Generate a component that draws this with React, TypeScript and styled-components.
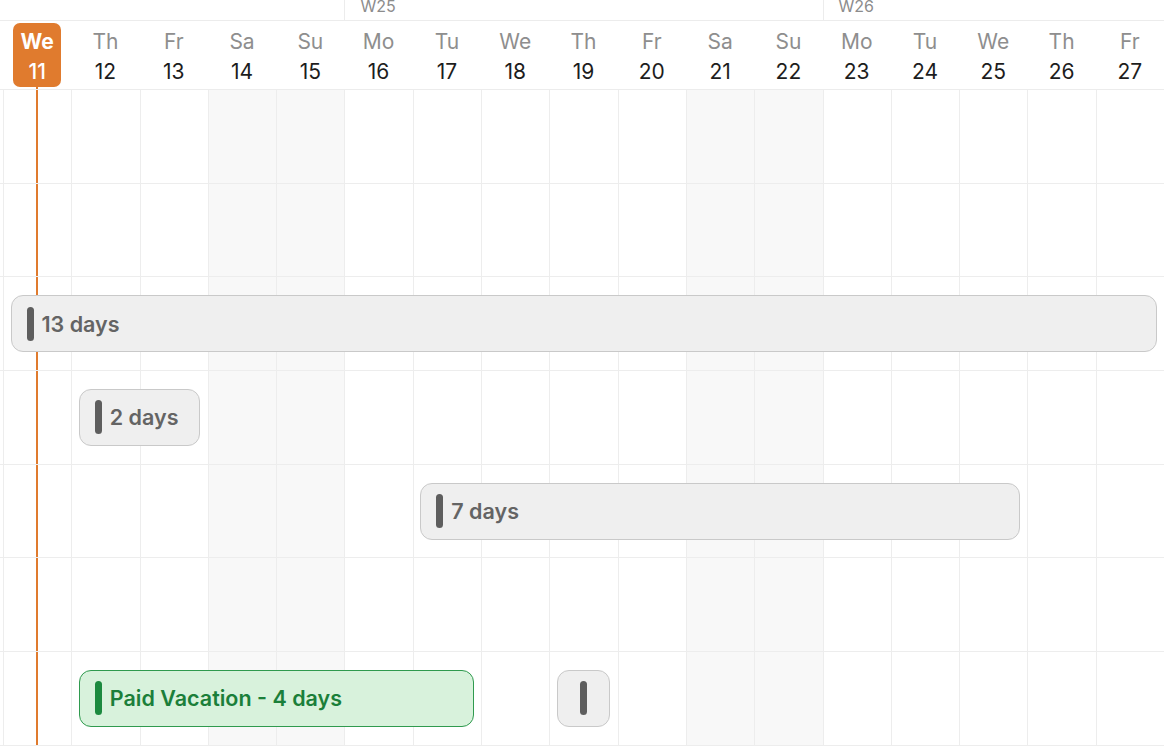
import * as React from 'react';
import styled, { createGlobalStyle, css } from 'styled-components';

const COL = 68.3;
const ROW = 93.7;

const GlobalStyle = createGlobalStyle`
  html, body {
    margin: 0;
    padding: 0;
    background: #fff;
    overflow: hidden;
  }
  body {
    font-family: Inter, "Noto Sans", "Liberation Sans", sans-serif;
    -webkit-font-smoothing: antialiased;
  }
`;

interface Day {
  name: string;
  num: number;
  weekend?: boolean;
  monday?: string;
  today?: boolean;
  offscreen?: boolean;
}

// first column is scrolled out of view, only its right edge line shows
const days: Day[] = [
  { name: 'Tu', num: 10, offscreen: true },
  { name: 'We', num: 11, today: true },
  { name: 'Th', num: 12 },
  { name: 'Fr', num: 13 },
  { name: 'Sa', num: 14, weekend: true },
  { name: 'Su', num: 15, weekend: true },
  { name: 'Mo', num: 16, monday: 'W25' },
  { name: 'Tu', num: 17 },
  { name: 'We', num: 18 },
  { name: 'Th', num: 19 },
  { name: 'Fr', num: 20 },
  { name: 'Sa', num: 21, weekend: true },
  { name: 'Su', num: 22, weekend: true },
  { name: 'Mo', num: 23, monday: 'W26' },
  { name: 'Tu', num: 24 },
  { name: 'We', num: 25 },
  { name: 'Th', num: 26 },
  { name: 'Fr', num: 27 },
];

interface Booking {
  start: number;
  span: number;
  label?: string;
  kind: 'pending' | 'vacation';
}

const lanes: Booking[][] = [
  [],
  [],
  [{ start: 1, span: 17, label: '13 days', kind: 'pending' }],
  [{ start: 2, span: 2, label: '2 days', kind: 'pending' }],
  [{ start: 7, span: 9, label: '7 days', kind: 'pending' }],
  [],
  [
    { start: 2, span: 6, label: 'Paid Vacation - 4 days', kind: 'vacation' },
    { start: 9, span: 1, kind: 'pending' },
  ],
];

const Viewport = styled.div`
  width: 1166px;
  height: 746px;
  overflow: hidden;
`;

const Timeline = styled.div`
  margin-left: ${-COL + 3}px;
  width: ${COL * days.length}px;
`;

const Columns = styled.div`
  display: grid;
  grid-template-columns: repeat(${days.length}, ${COL}px);
`;

const WeekRow = styled(Columns)`
  height: 21px;
  border-bottom: 1px solid #ececec;
  box-sizing: border-box;
`;

const WeekCell = styled.div<{ $start?: boolean }>`
  height: 100%;
  white-space: nowrap;
  ${(p) => p.$start && css`border-left: 1px solid #ececec;`}
`;

const WeekLabel = styled.span`
  display: block;
  padding-left: 15px;
  font-size: 16px;
  line-height: 12px;
  color: #8c8c8c;
`;

const HeaderRow = styled(Columns)`
  height: 69px;
  border-bottom: 1px solid #ececec;
  box-sizing: border-box;
`;

const HeaderCell = styled.div<{ $today?: boolean }>`
  display: flex;
  justify-content: center;
  ${(p) =>
    p.$today &&
    css`
      background: linear-gradient(#e07b2e, #e07b2e) calc(50% - 0.5px) bottom / 2px 6px no-repeat;
    `}
`;

const DayBadge = styled.div<{ $today?: boolean }>`
  margin-top: 2px;
  width: 48px;
  height: 64px;
  padding-top: 4px;
  box-sizing: border-box;
  border-radius: 7px;
  display: flex;
  flex-direction: column;
  align-items: center;
  font-size: 21px;
  line-height: 30px;
  background: ${(p) => (p.$today ? '#e07b2e' : 'transparent')};
`;

const DayName = styled.span<{ $today?: boolean }>`
  color: ${(p) => (p.$today ? '#fff' : '#8e8e8e')};
  font-weight: ${(p) => (p.$today ? 700 : 400)};
`;

const DayNum = styled.span<{ $today?: boolean }>`
  color: ${(p) => (p.$today ? '#fff' : '#1d1d1d')};
  font-weight: ${(p) => (p.$today ? 500 : 400)};
`;

const Lane = styled(Columns)`
  grid-template-rows: 100%;
  height: ${ROW}px;
  border-bottom: 1px solid #ededed;
  box-sizing: border-box;
`;

const DayCell = styled.div<{ $weekend?: boolean; $today?: boolean; $col: number }>`
  grid-row: 1;
  grid-column: ${(p) => p.$col + 1};
  border-left: 1px solid #ededed;
  background-color: ${(p) => (p.$weekend ? '#f8f8f8' : 'transparent')};
  ${(p) =>
    p.$today &&
    css`
      background-image: linear-gradient(#e07b2e, #e07b2e);
      background-size: 2px 100%;
      background-position: calc(50% - 0.5px) 0;
      background-repeat: no-repeat;
    `}
`;

const Bar = styled.div<{ $kind: 'pending' | 'vacation'; $compact?: boolean }>`
  grid-row: 1;
  align-self: center;
  z-index: 1;
  margin: 0 7.5px;
  height: 57px;
  box-sizing: border-box;
  border-radius: 12px;
  display: flex;
  align-items: center;
  gap: 8px;
  padding-left: ${(p) => (p.$compact ? 0 : 15)}px;
  justify-content: ${(p) => (p.$compact ? 'center' : 'flex-start')};
  font-size: 21.5px;
  font-weight: 600;
  white-space: nowrap;
  overflow: hidden;
  ${(p) =>
    p.$kind === 'vacation'
      ? css`
          background: #d8f2dc;
          border: 1px solid #2f9a4e;
          color: #1b7f3a;
        `
      : css`
          background: #efefef;
          border: 1px solid #c9c9c9;
          color: #646464;
        `}
`;

const Grip = styled.span<{ $kind: 'pending' | 'vacation' }>`
  flex: none;
  width: 7px;
  height: 34px;
  border-radius: 3.5px;
  background: ${(p) => (p.$kind === 'vacation' ? '#1c8a3f' : '#5e5e5e')};
`;

export default function App() {
  return (
    <Viewport>
      <GlobalStyle />
      <Timeline>
        <WeekRow>
          {days.map((d, i) => (
            <WeekCell key={i} $start={!!d.monday}>
              {d.monday && <WeekLabel>{d.monday}</WeekLabel>}
            </WeekCell>
          ))}
        </WeekRow>

        <HeaderRow>
          {days.map((d, i) => (
            <HeaderCell key={i} $today={d.today}>
              {!d.offscreen && (
                <DayBadge $today={d.today}>
                  <DayName $today={d.today}>{d.name}</DayName>
                  <DayNum $today={d.today}>{d.num}</DayNum>
                </DayBadge>
              )}
            </HeaderCell>
          ))}
        </HeaderRow>

        {lanes.map((bookings, r) => (
          <Lane key={r}>
            {days.map((d, i) => (
              <DayCell key={i} $col={i} $weekend={d.weekend} $today={d.today} />
            ))}
            {bookings.map((b, j) => (
              <Bar
                key={j}
                $kind={b.kind}
                $compact={!b.label}
                style={{ gridColumn: `${b.start + 1} / span ${b.span}` }}
              >
                <Grip $kind={b.kind} />
                {b.label}
              </Bar>
            ))}
          </Lane>
        ))}
      </Timeline>
    </Viewport>
  );
}
